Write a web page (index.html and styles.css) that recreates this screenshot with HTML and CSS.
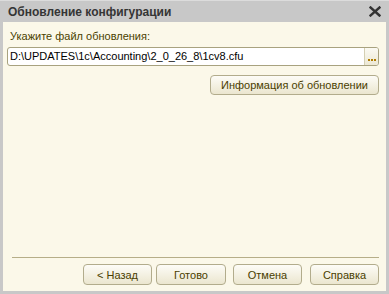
FILE: index.html
```html
<!DOCTYPE html>
<html lang="ru">
<head>
    <meta charset="UTF-8">
    <title>Обновление конфигурации</title>
    <link rel="stylesheet" href="styles.css">
</head>
<body>
    <div class="window">
        <div class="title-bar">
            <span class="title">Обновление конфигурации</span>
            <svg class="close" viewBox="0 0 12 11" width="12" height="11">
                <path d="M1.5 1.5L10.5 9.5M10.5 1.5L1.5 9.5" stroke="#333" stroke-width="2.4" stroke-linecap="square"/>
            </svg>
        </div>
        <div class="content">
            <div class="field-label">Укажите файл обновления:</div>
            <div class="file-input">
                <div class="file-path">D:\UPDATES\1c\Accounting\2_0_26_8\1cv8.cfu</div>
                <div class="file-button">
                    <span class="dot"></span><span class="dot"></span><span class="dot"></span>
                </div>
            </div>
            <div class="info-row">
                <button class="btn btn-info">Информация об обновлении</button>
            </div>
            <div class="spacer"></div>
            <div class="separator"></div>
            <div class="footer">
                <button class="btn">&lt; Назад</button>
                <button class="btn btn-wide">Готово</button>
                <button class="btn btn-far">Отмена</button>
                <button class="btn btn-far">Справка</button>
            </div>
        </div>
    </div>
</body>
</html>
```

FILE: styles.css
```css
body {
    margin: 0;
    font-family: "Liberation Sans", Arial, sans-serif;
    background-color: #c8c8c8;
}

.window {
    width: 389px;
    height: 294px;
    box-sizing: border-box;
    background-color: #c8c8c8;
    border-top: 1px solid #dcdcdc;
    padding: 0 3px 3px 3px;
    display: flex;
    flex-direction: column;
}

.title-bar {
    height: 21px;
    display: flex;
    align-items: center;
    justify-content: space-between;
    padding: 0 5px 0 5px;
}

.title {
    font-family: "Liberation Sans", Arial, sans-serif;
    font-weight: bold;
    font-size: 12px;
    color: #353535;
}

.close {
    display: block;
}

.content {
    flex: 1;
    background-color: #fbf8e9;
    display: flex;
    flex-direction: column;
    padding: 8px 7px 6px 4px;
    font-size: 11px;
    color: #333333;
}

.field-label {
    padding-left: 3px;
    line-height: 13px;
    margin-bottom: 4px;
    color: #4a4200;
}

.file-input {
    display: flex;
    height: 17px;
    border: 1px solid #a8a27f;
    border-radius: 3px;
    background-color: white;
    overflow: hidden;
}

.file-path {
    flex: 1;
    padding-left: 2px;
    line-height: 17px;
    color: #000000;
}

.file-button {
    width: 14px;
    border-left: 1px solid #d4cfb3;
    background: linear-gradient(#fbfaf3, #ece8d4);
    display: flex;
    align-items: flex-end;
    justify-content: center;
    gap: 1px;
    padding-bottom: 4px;
    box-sizing: border-box;
}

.dot {
    width: 2px;
    height: 2px;
    background-color: #b07c00;
}

.info-row {
    display: flex;
    justify-content: flex-end;
    margin-top: 9px;
}

.btn {
    font-family: "Liberation Sans", Arial, sans-serif;
    font-size: 11px;
    color: #4a3e00;
    height: 21px;
    width: 69px;
    padding: 0;
    border: 1px solid #b2ac8c;
    border-radius: 4px;
    background: linear-gradient(#fdfcf7, #ebe6cf);
}

.btn-info {
    width: 169px;
    height: 20px;
}

.spacer {
    flex: 1;
}

.separator {
    height: 1px;
    background-color: #b6ae88;
    margin: 0 0 6px 5px;
}

.footer {
    display: flex;
    justify-content: flex-end;
    gap: 4px;
}

.btn-wide {
    width: 70px;
}

.btn-far {
    margin-left: 3px;
}

.btn-far:last-child {
    margin-left: 4px;
}
```
